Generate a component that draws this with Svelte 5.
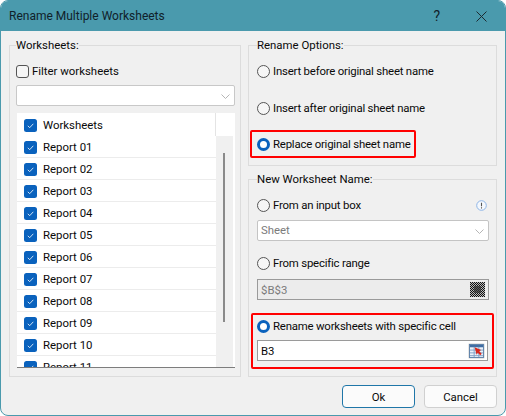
<script>
  const reports = ["Worksheets", "Report 01", "Report 02", "Report 03", "Report 04", "Report 05", "Report 06", "Report 07", "Report 08", "Report 09", "Report 10", "Report 11"];
</script>

<div class="window">
  <header class="titlebar">
    <span class="title">Rename Multiple Worksheets</span>
    <span class="help">?</span>
    <svg class="close" width="11" height="11" viewBox="0 0 11 11"><path d="M.5.5l10 10M10.5.5l-10 10" stroke="#1c2a30" stroke-width="1" fill="none"/></svg>
  </header>

  <div class="main">
    <fieldset class="left">
      <legend>Worksheets:</legend>
      <div class="filter"><span class="box"></span>Filter worksheets</div>
      <div class="combo">
        <svg class="chev" width="9" height="5" viewBox="0 0 9 5"><path d="M.5.5l4 4 4-4" stroke="#b5b5b5" fill="none"/></svg>
      </div>
      <div class="list">
        <div class="rows">
          {#each reports as name, i}
            <div class="item" class:head={i === 0}>
              <svg class="check" width="13" height="13" viewBox="0 0 13 13"><rect width="13" height="13" rx="2.5" fill="#0a62bd"/><path d="M3.8 6.8l1.9 1.9 3.6-3.9" stroke="#cfe2f5" fill="none"/></svg>
              {name}
            </div>
          {/each}
        </div>
        <div class="scroll"><div class="top"></div><div class="thumb"></div></div>
      </div>
    </fieldset>

    <div class="right">
      <fieldset class="options">
        <legend>Rename Options:</legend>
        <div class="radio first"><span class="dot"></span>Insert before original sheet name</div>
        <div class="radio next"><span class="dot"></span>Insert after original sheet name</div>
        <div class="radio red-row"><span class="dot on"></span>Replace original sheet name</div>
      </fieldset>

      <fieldset class="names">
        <legend>New Worksheet Name:</legend>
        <div class="radio first">
          <span class="dot"></span>From an input box
          <svg class="info" width="11" height="11" viewBox="0 0 11 11"><circle cx="5.5" cy="5.5" r="4.8" fill="#f4f8fd" stroke="#8db4e6"/><path d="M5.5 2.7v3.6M5.5 7.3v1.2" stroke="#555" stroke-width="1.1"/></svg>
        </div>
        <div class="combo wide disabled">
          Sheet
          <svg class="chev" width="9" height="5" viewBox="0 0 9 5"><path d="M.5.5l4 4 4-4" stroke="#b5b5b5" fill="none"/></svg>
        </div>
        <div class="radio range"><span class="dot"></span>From specific range</div>
        <div class="field grey">
          $B$3
          <svg width="15" height="15" viewBox="0 0 15 15">
            <defs><pattern id="dots" width="2" height="2" patternUnits="userSpaceOnUse"><rect width="2" height="2" fill="#b8b8b8"/><rect width="1" height="1" fill="#111"/><rect x="1" y="1" width="1" height="1" fill="#111"/></pattern></defs>
            <rect width="15" height="15" fill="url(#dots)"/><rect x="4" y="4" width="7" height="7" fill="#333" opacity=".7"/>
          </svg>
        </div>
        <div class="red-block">
          <div class="radio"><span class="dot on"></span>Rename worksheets with specific cell</div>
          <div class="field cell">
            B3
            <span class="pick">
              <svg width="15" height="14" viewBox="0 0 16 15">
                <rect x=".5" y=".5" width="15" height="14" fill="#eaf1f9" stroke="#5b7fa8"/>
                <rect x="1" y="1" width="14" height="2.5" fill="#3f6da3"/>
                <path d="M1 6.5h14M1 9.5h14M1 12.5h14M5.5 3v11M10.5 3v11" stroke="#7f9fc4"/>
                <path d="M6 3.5l7 3-2 1.3 2.6 2.7-1.6 1.6-2.6-2.7-1.3 2z" fill="#d8261c"/>
              </svg>
            </span>
          </div>
        </div>
      </fieldset>
    </div>
  </div>

  <footer class="buttons">
    <button class="primary">Ok</button>
    <button>Cancel</button>
  </footer>
</div>

<style>
  :global(body) {
    background: #fff;
  }

  .window {
    box-sizing: border-box;
    width: 506px;
    height: 416px;
    border: 1px solid #4a9aad;
    border-radius: 8px;
    background: #f0f0f0;
    overflow: hidden;
    font-family: Roboto, "Noto Sans", sans-serif;
    font-size: 11.4px;
    line-height: 16px;
    color: #0a0a0a;
  }

  .titlebar {
    display: flex;
    align-items: center;
    height: 30px;
    padding: 0 18px 0 8px;
    background: #4a9aad;
    color: #10212a;
    font-size: 12px;
  }

  .title {
    flex: 1;
  }

  .help {
    margin-right: 36px;
    font-size: 14px;
  }

  .main {
    display: flex;
    gap: 7px;
    padding: 6px 8px 0;
  }

  fieldset {
    box-sizing: border-box;
    margin: 0;
    min-width: 0;
    border: 1px solid #dcdcdc;
  }

  legend {
    padding: 0;
  }

  .left {
    width: 232px;
    height: 340px;
    padding: 0 5px 0 6px;
  }

  .filter {
    display: flex;
    align-items: center;
    gap: 3px;
    margin-top: 10px;
  }

  .box {
    box-sizing: border-box;
    width: 13px;
    height: 13px;
    border: 1px solid #555;
    border-radius: 3px;
    background: #f6f6f6;
  }

  .combo {
    box-sizing: border-box;
    position: relative;
    height: 21px;
    margin-top: 6px;
    padding-left: 2px;
    border: 1px solid #c8c8c8;
    border-radius: 2px;
    background: #fff;
    line-height: 19px;
  }

  .chev {
    position: absolute;
    right: 4px;
    top: 8px;
  }

  .list {
    display: flex;
    height: 254px;
    margin-top: 7px;
    margin-left: 1px;
    border-bottom: 1px solid #7d7d7d;
    background: #fff;
    overflow: hidden;
  }

  .rows {
    width: 199px;
  }

  .item {
    box-sizing: border-box;
    display: flex;
    align-items: center;
    gap: 6px;
    height: 22px;
    padding: 1px 0 0 7px;
    border-bottom: 1px solid #ececec;
  }

  .item.head {
    height: 23px;
    border-bottom: none;
    border-right: 1px solid #e4e4e4;
  }

  .scroll {
    width: 17px;
    background: #f0f0f0;
  }

  .top {
    height: 23px;
    background: #fff;
  }

  .thumb {
    width: 2px;
    height: 169px;
    margin: 17px 0 0 7px;
    background: #8a8a8a;
  }

  .right {
    display: flex;
    flex-direction: column;
    gap: 5px;
    width: 249px;
  }

  .options {
    height: 129px;
    padding: 0 7px 0 8px;
  }

  .names {
    height: 206px;
    padding: 0 7px 0 8px;
  }

  .radio {
    display: flex;
    align-items: center;
    gap: 3px;
    height: 16px;
    letter-spacing: -0.2px;
    white-space: nowrap;
  }

  .radio.first {
    margin-top: 10px;
  }

  .radio.next {
    margin-top: 21px;
  }

  .red-row {
    box-sizing: border-box;
    width: 166px;
    height: 28px;
    margin: 14px 0 0 -7px;
    padding-left: 5px;
    border: 2px solid #f00;
    border-radius: 2px;
  }

  .dot {
    flex-shrink: 0;
    box-sizing: border-box;
    width: 13px;
    height: 13px;
    border: 1px solid #555;
    border-radius: 50%;
    background: #f6f6f6;
  }

  .dot.on {
    border: 3.5px solid #0a62bd;
    background: #fff;
  }

  .info {
    margin-left: auto;
    margin-right: 2px;
  }

  .wide {
    margin-top: 7px;
    border-color: #c4c4c4;
  }

  .disabled {
    color: #7b7b7b;
    padding-left: 3px;
  }

  .range {
    margin-top: 14px;
  }

  .field {
    box-sizing: border-box;
    display: flex;
    align-items: center;
    justify-content: space-between;
    height: 21px;
    padding: 0 2px 0 3px;
    border: 1px solid #9a9a9a;
  }

  .field.grey {
    margin-top: 8px;
    background: #ececec;
    color: #7b7b7b;
    padding-right: 3px;
  }

  .red-block {
    box-sizing: border-box;
    width: 243px;
    height: 56px;
    margin: 13px 0 0 -6px;
    padding: 3px 4px 0;
    border: 2px solid #f00;
    border-radius: 2px;
  }

  .field.cell {
    margin-top: 6px;
    background: #fff;
    color: #0a0a0a;
  }

  .pick {
    display: flex;
    padding: 1px;
    background: #e6e6e6;
    border-radius: 2px;
  }

  .buttons {
    display: flex;
    justify-content: flex-end;
    gap: 9px;
    padding: 8px 8px 0 0;
  }

  button {
    box-sizing: border-box;
    width: 73px;
    height: 23px;
    padding: 0;
    border: 1px solid #d0d0d0;
    border-radius: 4px;
    background: #fbfbfb;
    font: inherit;
    color: #0a0a0a;
  }

  .primary {
    border-color: #1f76a8;
  }
</style>
